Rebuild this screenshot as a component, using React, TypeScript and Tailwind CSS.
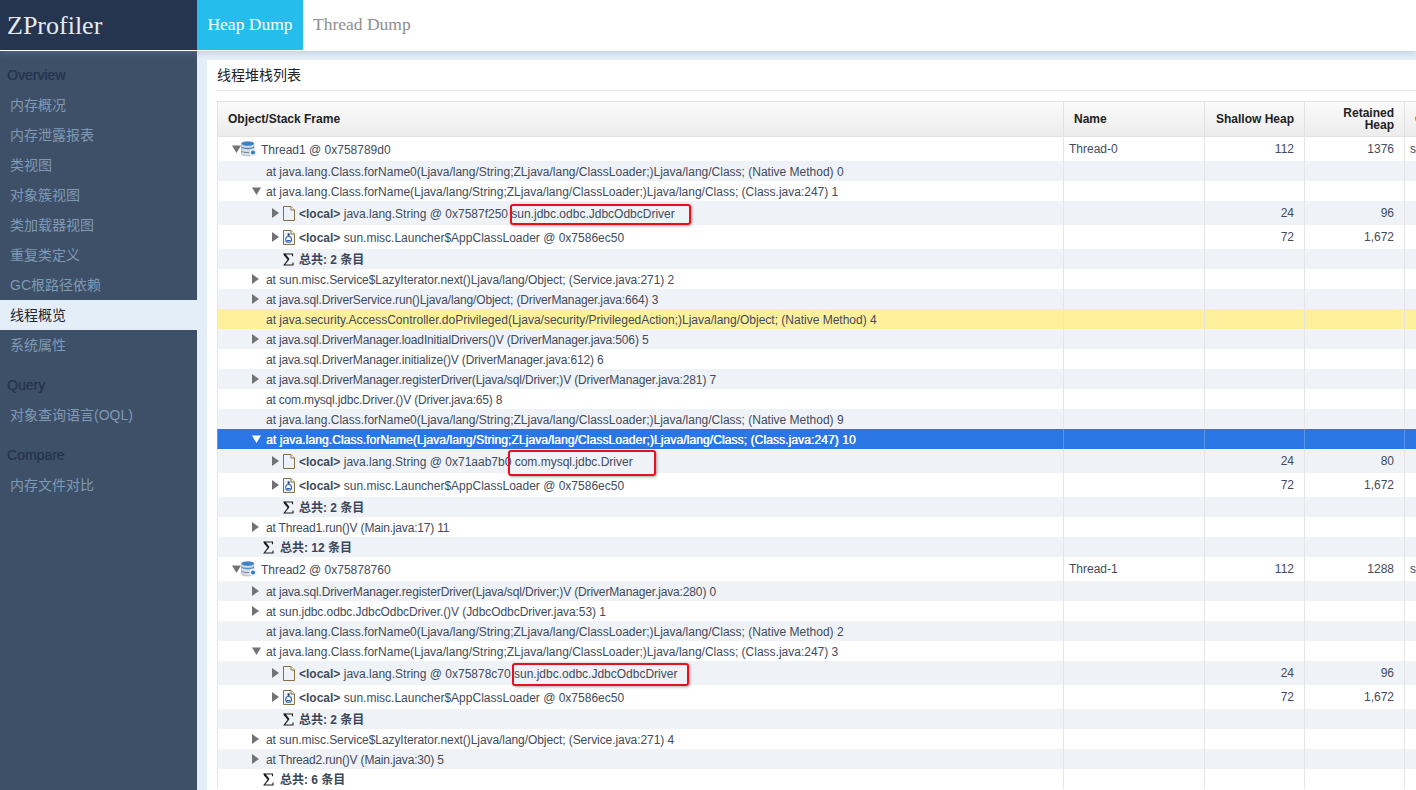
import type { ReactNode } from "react";

type Kind = "thread" | "frame" | "local" | "loader" | "sum" | "sumTop";
type Row = {
  kind: Kind;
  text: string;
  toggle?: "open" | "closed";
  name?: string;
  shallow?: string;
  retained?: string;
  tail?: string;
  tone?: "yellow" | "blue";
  tight?: 1 | 2 | 3;
};

const CLASS_FORNAME0 =
  "at java.lang.Class.forName0(Ljava/lang/String;ZLjava/lang/ClassLoader;)Ljava/lang/Class; (Native Method)";
const CLASS_FORNAME =
  "at java.lang.Class.forName(Ljava/lang/String;ZLjava/lang/ClassLoader;)Ljava/lang/Class; (Class.java:247)";
const LOADER = "sun.misc.Launcher$AppClassLoader @ 0x7586ec50";

const tightness = {
  1: "tracking-[-0.07px]",
  2: "tracking-[-0.14px]",
  3: "tracking-[-0.18px]",
};

const rows: Row[] = [
  { kind: "thread", toggle: "open", text: "Thread1 @ 0x758789d0", name: "Thread-0", shallow: "112", retained: "1376", tail: "sun.misc" },
  { kind: "frame", text: `${CLASS_FORNAME0} 0` },
  { kind: "frame", toggle: "open", text: `${CLASS_FORNAME} 1` },
  { kind: "local", toggle: "closed", text: "java.lang.String @ 0x7587f250 sun.jdbc.odbc.JdbcOdbcDriver", shallow: "24", retained: "96" },
  { kind: "loader", toggle: "closed", text: LOADER, shallow: "72", retained: "1,672" },
  { kind: "sum", text: "2" },
  { kind: "frame", toggle: "closed", tight: 1, text: "at sun.misc.Service$LazyIterator.next()Ljava/lang/Object; (Service.java:271) 2" },
  { kind: "frame", toggle: "closed", tight: 2, text: "at java.sql.DriverService.run()Ljava/lang/Object; (DriverManager.java:664) 3" },
  { kind: "frame", tone: "yellow", text: "at java.security.AccessController.doPrivileged(Ljava/security/PrivilegedAction;)Ljava/lang/Object; (Native Method) 4" },
  { kind: "frame", toggle: "closed", tight: 2, text: "at java.sql.DriverManager.loadInitialDrivers()V (DriverManager.java:506) 5" },
  { kind: "frame", tight: 2, text: "at java.sql.DriverManager.initialize()V (DriverManager.java:612) 6" },
  { kind: "frame", toggle: "closed", tight: 2, text: "at java.sql.DriverManager.registerDriver(Ljava/sql/Driver;)V (DriverManager.java:281) 7" },
  { kind: "frame", tight: 3, text: "at com.mysql.jdbc.Driver.()V (Driver.java:65) 8" },
  { kind: "frame", text: `${CLASS_FORNAME0} 9` },
  { kind: "frame", toggle: "open", tone: "blue", text: `${CLASS_FORNAME} 10` },
  { kind: "local", toggle: "closed", text: "java.lang.String @ 0x71aab7b0 com.mysql.jdbc.Driver", shallow: "24", retained: "80" },
  { kind: "loader", toggle: "closed", text: LOADER, shallow: "72", retained: "1,672" },
  { kind: "sum", text: "2" },
  { kind: "frame", toggle: "closed", tight: 3, text: "at Thread1.run()V (Main.java:17) 11" },
  { kind: "sumTop", text: "12" },
  { kind: "thread", toggle: "open", text: "Thread2 @ 0x75878760", name: "Thread-1", shallow: "112", retained: "1288", tail: "sun.misc" },
  { kind: "frame", toggle: "closed", tight: 2, text: "at java.sql.DriverManager.registerDriver(Ljava/sql/Driver;)V (DriverManager.java:280) 0" },
  { kind: "frame", toggle: "closed", tight: 1, text: "at sun.jdbc.odbc.JdbcOdbcDriver.()V (JdbcOdbcDriver.java:53) 1" },
  { kind: "frame", text: `${CLASS_FORNAME0} 2` },
  { kind: "frame", toggle: "open", text: `${CLASS_FORNAME} 3` },
  { kind: "local", toggle: "closed", text: "java.lang.String @ 0x75878c70 sun.jdbc.odbc.JdbcOdbcDriver", shallow: "24", retained: "96" },
  { kind: "loader", toggle: "closed", text: LOADER, shallow: "72", retained: "1,672" },
  { kind: "sum", text: "2" },
  { kind: "frame", toggle: "closed", tight: 1, text: "at sun.misc.Service$LazyIterator.next()Ljava/lang/Object; (Service.java:271) 4" },
  { kind: "frame", toggle: "closed", tight: 3, text: "at Thread2.run()V (Main.java:30) 5" },
  { kind: "sumTop", text: "6" },
];

function Toggle({ dir, light }: { dir: "open" | "closed"; light: boolean }) {
  const fill = light ? "#ffffff" : "#737373";
  return dir === "open" ? (
    <svg width="9" height="8" viewBox="0 0 9 8" className="block">
      <path d="M0 0.5H9L4.5 8Z" fill={fill} />
    </svg>
  ) : (
    <svg width="7" height="10" viewBox="0 0 7 10" className="block">
      <path d="M0 0L7 5L0 10Z" fill={fill} />
    </svg>
  );
}

function DbIcon() {
  return (
    <svg width="16" height="16" viewBox="0 0 16 16" className="block">
      <path d="M0.5 2.5C0.5 0.2 13 0.2 13 2.5V13C13 15.6 0.5 15.6 0.5 13Z" fill="#d5dde4" stroke="#8d9aa6" strokeWidth="0.5" />
      <ellipse cx="6.75" cy="2.6" rx="6.25" ry="2.2" fill="#3b82c6" />
      <path d="M0.5 5.2C2 7.4 11.5 7.4 13 5.2V6.6C11.5 8.8 2 8.8 0.5 6.6Z" fill="#4f8abf" />
      <path d="M0.5 9.4C2 11.4 11.5 11.4 13 9.4V10.6C11.5 12.6 2 12.6 0.5 10.6Z" fill="#71899f" />
      <circle cx="12" cy="11.5" r="3.6" fill="#eef3f8" />
      <circle cx="12" cy="11.5" r="2" fill="#2a7bd0" />
    </svg>
  );
}

function FileIcon({ bottle }: { bottle?: boolean }) {
  return (
    <svg width="12" height="15" viewBox="0 0 12 15" className="block">
      <path d="M0.5 0.5H8L11.5 4V14.5H0.5Z" fill="#eef3fb" stroke="#85703c" />
      <path d="M8 0.5V4H11.5" fill="#ffffff" stroke="#85703c" />
      {bottle && (
        <>
          <rect x="4.6" y="3.4" width="2" height="2.4" fill="#222f55" />
          <circle cx="5.6" cy="9.4" r="2.9" fill="#ffffff" stroke="#2f64ad" strokeWidth="1.1" />
          <path d="M3.4 10H7.8C7.6 11.6 3.6 11.6 3.4 10Z" fill="#2f64ad" />
        </>
      )}
    </svg>
  );
}

function SigmaIcon() {
  return (
    <svg width="11" height="13" viewBox="0 0 11 13" className="block">
      <path d="M9.5 3.2V1H1.2L5.6 6.4L1.2 12H10V9.6" fill="none" stroke="#1d1d1d" strokeWidth="1.1" />
      <path d="M1.2 1L5.6 6.4" fill="none" stroke="#1d1d1d" strokeWidth="2" />
    </svg>
  );
}

function FrameCell({ row, light }: { row: Row; light: boolean }) {
  const toggle = (w: string) => (
    <span className={`flex shrink-0 items-center ${w}`}>
      {row.toggle && <Toggle dir={row.toggle} light={light} />}
    </span>
  );

  if (row.kind === "thread") {
    return (
      <div className="flex items-center pl-[14px]">
        {toggle("w-[9px]")}
        <span className="mr-[4px] w-[16px] shrink-0">
          <DbIcon />
        </span>
        <span className="pt-px">{row.text}</span>
      </div>
    );
  }
  if (row.kind === "frame") {
    const spacing = light
      ? "tracking-[0.1px] [text-shadow:0.4px_0_0_#ffffff]"
      : row.tight
        ? tightness[row.tight]
        : "";
    return (
      <div className="flex items-center pl-[34px]">
        {toggle("w-[14px]")}
        <span className={`pt-px ${spacing}`}>{row.text}</span>
      </div>
    );
  }
  if (row.kind === "local" || row.kind === "loader") {
    return (
      <div className="flex items-center pl-[54px]">
        {toggle("w-[11px]")}
        <span className="w-[16px] shrink-0">
          <FileIcon bottle={row.kind === "loader"} />
        </span>
        <span className="pt-px">
          <b className="font-bold">&lt;local&gt;</b> {row.text}
        </span>
      </div>
    );
  }
  const summary: ReactNode = (
    <span className="pt-px font-bold text-[#3a4658]">
      总共: {row.text} 条目
    </span>
  );
  return (
    <div className={`flex items-center ${row.kind === "sum" ? "pl-[65px]" : "pl-[45px]"}`}>
      <span className={`shrink-0 ${row.kind === "sum" ? "w-[16px]" : "w-[17px]"}`}>
        <SigmaIcon />
      </span>
      {summary}
    </div>
  );
}

function TableRow({ row, index }: { row: Row; index: number }) {
  const tall = row.kind === "thread" || row.kind === "local" || row.kind === "loader";
  const bg =
    row.tone === "yellow"
      ? "bg-[#fff09c]"
      : row.tone === "blue"
        ? "bg-[#2b76e5] text-white"
        : index % 2 === 1
          ? "bg-[#eff2f7]"
          : "bg-white";
  const line = row.tone === "blue" ? "border-[#5d95ea]" : "border-[#e5e5e5]";
  return (
    <tr className={`${bg} ${tall ? "h-[24px]" : "h-[20px]"}`}>
      <td className={`whitespace-nowrap border-l border-r ${line} p-0`}>
        <FrameCell row={row} light={row.tone === "blue"} />
      </td>
      <td className={`border-r ${line} p-0 pl-[5px]`}>{row.name}</td>
      <td className={`border-r ${line} p-0 pr-[10px] text-right`}>{row.shallow}</td>
      <td className={`border-r ${line} p-0 pr-[10px] text-right`}>{row.retained}</td>
      <td className="whitespace-nowrap p-0 pl-[5px]">{row.tail}</td>
    </tr>
  );
}

const nav = [
  { title: "Overview", items: ["内存概况", "内存泄露报表", "类视图", "对象簇视图", "类加载器视图", "重复类定义", "GC根路径依赖", "线程概览", "系统属性"] },
  { title: "Query", items: ["对象查询语言(OQL)"] },
  { title: "Compare", items: ["内存文件对比"] },
];

function Sidebar() {
  return (
    <aside className="w-[197px] shrink-0 bg-[#3e5068] pt-[9px]">
      {nav.map((group) => (
        <div key={group.title} className="mb-[10px]">
          <div className="flex h-[30px] items-center pl-[7px] text-[14px] text-[#26354f] [text-shadow:0.3px_0_0_#26354f]">
            {group.title}
          </div>
          {group.items.map((item) => (
            <div
              key={item}
              className={`flex h-[30px] items-center pl-[10px] text-[14px] ${
                item === "线程概览" ? "bg-[#e4eef8] text-[#1f2733]" : "text-[#7f99b5]"
              }`}
            >
              {item}
            </div>
          ))}
        </div>
      ))}
    </aside>
  );
}

export default function App() {
  return (
    <div className="flex h-[790px] w-full flex-col overflow-hidden bg-white font-[Liberation_Sans,Noto_Sans_CJK_SC,sans-serif] text-[12px] text-[#424b5a]">
      <header className="relative z-10 flex h-[51px] shrink-0 border-b border-white bg-white shadow-[0_2px_6px_rgba(120,150,190,0.35)]">
        <div className="flex w-[197px] items-center bg-[#25354f] pl-[7px] font-[Liberation_Serif,serif] text-[26px] text-[#e6e9ee]">
          ZProfiler
        </div>
        <div className="flex w-[106px] items-center justify-center bg-[#25bdeb] pb-px font-[Liberation_Serif,serif] text-[17.5px] text-white">
          Heap Dump
        </div>
        <div className="flex items-center pb-px pl-[10px] font-[Liberation_Serif,serif] text-[17.5px] text-[#8e8e8e]">
          Thread Dump
        </div>
      </header>

      <div className="flex min-h-0 flex-1">
        <Sidebar />
        <main className="min-w-0 flex-1 bg-[#e4eef8] pl-[10px] pt-[9px]">
          <div className="relative h-full bg-white pl-[10px]">
            <h2 className="flex h-[31px] items-center border-b border-[#e5e5e5] text-[14px] font-normal text-[#222222]">
              线程堆栈列表
            </h2>
            <table className="mt-[10px] w-[1320px] table-fixed border-separate border-spacing-0 leading-none">
              <colgroup>
                <col className="w-[847px]" />
                <col className="w-[141px]" />
                <col className="w-[100px]" />
                <col className="w-[100px]" />
                <col className="w-[132px]" />
              </colgroup>
              <thead>
                <tr className="h-[36px] bg-gradient-to-b from-[#fbfbfb] to-[#ececec] font-bold text-[#222222]">
                  <th className="border-y border-l border-r border-[#e2e2e2] p-0 pl-[10px] text-left">Object/Stack Frame</th>
                  <th className="border-y border-r border-[#e2e2e2] p-0 pl-[10px] text-left">Name</th>
                  <th className="border-y border-r border-[#e2e2e2] p-0 pr-[10px] text-right">Shallow Heap</th>
                  <th className="border-y border-r border-[#e2e2e2] p-0 pr-[10px] text-right">
                    Retained
                    <br />
                    Heap
                  </th>
                  <th className="border-y border-[#e2e2e2] p-0 pl-[10px] text-left">Class</th>
                </tr>
              </thead>
              <tbody>
                {rows.map((row, i) => (
                  <TableRow key={i} row={row} index={i} />
                ))}
              </tbody>
            </table>

            {/* red callouts drawn on top of the shot */}
            <div className="absolute left-[303px] top-[144px] h-[21px] w-[181px] rounded-[3px] border-2 border-[#e8101c] shadow-[1px_1px_3px_rgba(0,0,0,0.35)]" />
            <div className="absolute left-[301px] top-[390px] h-[26px] w-[148px] rounded-[3px] border-2 border-[#e8101c] shadow-[1px_1px_3px_rgba(0,0,0,0.35)]" />
            <div className="absolute left-[305px] top-[603px] h-[23px] w-[177px] rounded-[3px] border-2 border-[#e8101c] shadow-[1px_1px_3px_rgba(0,0,0,0.35)]" />
          </div>
        </main>
      </div>
    </div>
  );
}
